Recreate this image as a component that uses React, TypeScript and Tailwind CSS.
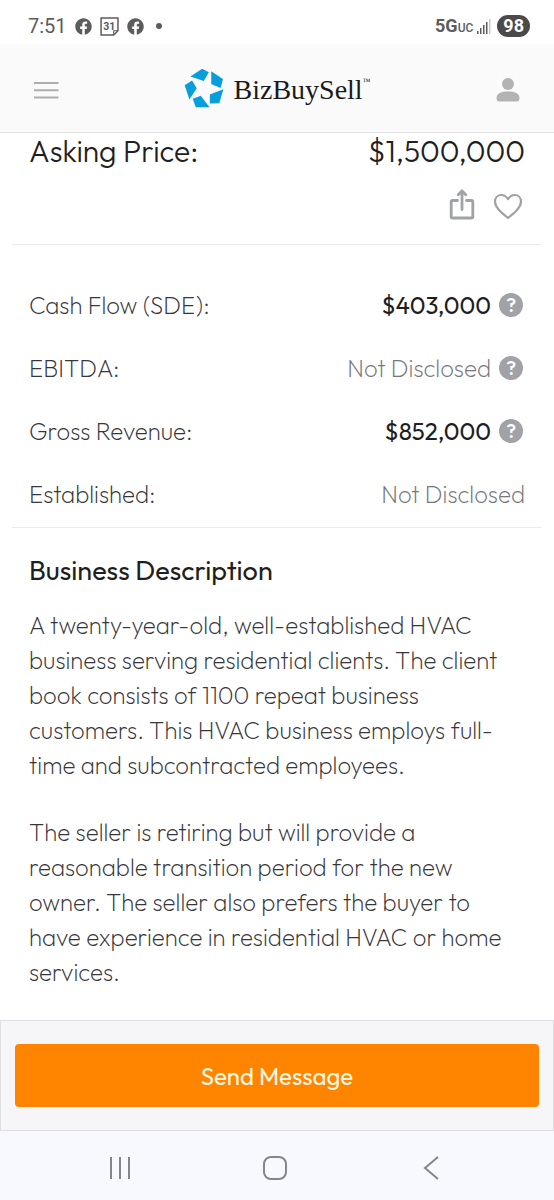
import React from 'react'
import { FaFacebook } from 'react-icons/fa'

type Metric = {
  label: string
  value: string
  disclosed: boolean
  help: boolean
}

const metrics: Metric[] = [
  { label: 'Cash Flow (SDE):', value: '$403,000', disclosed: true, help: true },
  { label: 'EBITDA:', value: 'Not Disclosed', disclosed: false, help: true },
  { label: 'Gross Revenue:', value: '$852,000', disclosed: true, help: true },
  { label: 'Established:', value: 'Not Disclosed', disclosed: false, help: false },
]

const paragraphs = [
  'A twenty-year-old, well-established HVAC business serving residential clients. The client book consists of 1100 repeat business customers. This HVAC business employs full-time and subcontracted employees.',
  'The seller is retiring but will provide a reasonable transition period for the new owner. The seller also prefers the buyer to have experience in residential HVAC or home services.',
]

// ─── Phone status bar ───────────────────────────────────────────────────────
const StatusBar: React.FC = () => (
  <div className="flex h-11 items-center justify-between bg-white pl-7 pr-6 pt-2 font-['Roboto',sans-serif] text-[#5c5c5c]">
    <div className="flex items-center gap-2">
      <span className="text-xl">7:51</span>
      <FaFacebook size={17} />
      <svg width="19" height="19" viewBox="0 0 18 18" fill="none" stroke="currentColor" strokeWidth="1.400">
        <path d="M1 1h16v12L13 17H1z" />
        <path d="M13 17v-4h4" strokeWidth="1" />
        <text x="8.800" y="12.600" textAnchor="middle" fontSize="10" fontWeight="700" fill="currentColor" stroke="none">31</text>
      </svg>
      <FaFacebook size={17} />
      <span className="ml-1 size-1.5 rounded-full bg-current" />
    </div>
    <div className="flex items-center">
      <span className="text-lg font-bold">5G</span>
      <span className="pt-1 text-xs font-medium">UC</span>
      <svg className="ml-1 mr-1.5" width="14" height="15" viewBox="0 0 14 15" fill="currentColor">
        <rect x="0" y="12" width="1.500" height="3" />
        <rect x="3" y="9" width="1.500" height="6" />
        <rect x="6" y="6" width="1.500" height="9" />
        <rect x="9" y="3" width="1.500" height="12" />
        <rect x="12" y="0" width="1.500" height="15" opacity="0.350" />
      </svg>
      <span className="rounded-full bg-[#4a4a4a] px-1.5 text-lg font-bold leading-[22px] text-white">98</span>
    </div>
  </div>
)

// ─── Site header ────────────────────────────────────────────────────────────
const Logo: React.FC = () => (
  <a href="#" className="flex items-center gap-2.5">
    <svg width="40" height="40" viewBox="547 24 119 118" fill="#069fdc">
      <path d="M566 49 601 26 621 36 606 62z" />
      <path d="M628 33 663 56 656 83 628 71z" />
      <path d="M664 87 652 128 624 129 624 102z" />
      <path d="M573 115 597 106 623 140 582 140z" />
      <path d="M549 75 571 61 585 84 563 117z" />
    </svg>
    <span className="flex items-start pt-1 font-['Liberation_Serif',serif] text-[28px] leading-9 text-[#1b1b1b]">
      BizBuySell<span className="pt-1 text-[8px] leading-3">™</span>
    </span>
  </a>
)

const Header: React.FC = () => (
  <header className="flex h-[89px] items-center justify-between border-b border-[#e2e2e2] bg-[#fafafa] px-8">
    <button type="button" aria-label="Menu" className="pt-1 text-[#adadad]">
      <svg width="28" height="20" viewBox="0 0 28 20" stroke="currentColor" strokeWidth="2">
        <path d="M2 3h24.500M2 10.200h24.500M2 17.400h24.500" />
      </svg>
    </button>
    <Logo />
    <button type="button" aria-label="Account" className="pt-1 text-[#b3b3b3]">
      <svg width="28" height="26" viewBox="0 0 28 26" fill="currentColor">
        <circle cx="14" cy="7" r="6" />
        <path d="M2.500 21c0-5 5-6.500 11.500-6.500S25.500 16 25.500 21c0 2.500-.8 3.500-3 3.500h-17c-2.200 0-3-1-3-3.500z" />
      </svg>
    </button>
  </header>
)

// ─── Price and actions ──────────────────────────────────────────────────────
const PriceSection: React.FC = () => (
  <section className="mx-3 border-b border-[#ececec] px-[17px] pb-5">
    <div className="flex items-center justify-between text-[30px] font-light leading-9 text-[#1f1f22]">
      <h1>Asking Price:</h1>
      <p>$1,500,000</p>
    </div>
    <div className="flex items-center justify-end gap-[18px] pt-5 text-[#a0a2a5]">
      <button type="button" aria-label="Share">
        <svg className="mb-1" width="26" height="31" viewBox="0 0 26 31" fill="none" stroke="currentColor" strokeWidth="2.800" strokeLinecap="round">
          <path d="M8.500 11.500H3.500c-.8 0-1.300.5-1.300 1.300v14.900c0 .8.5 1.300 1.300 1.300h19c.8 0 1.300-.5 1.300-1.300V12.800c0-.8-.5-1.300-1.300-1.300h-5" />
          <path d="M13 20.500V3M9.200 5.800 13 2l3.800 3.800" />
        </svg>
      </button>
      <button type="button" aria-label="Save">
        <svg width="32" height="27" viewBox="0 0 32 27" fill="none" stroke="currentColor" strokeWidth="2.200" strokeLinejoin="round">
          <path d="M15 6.200C13 3.200 11 2 8.500 2 4.500 2 2 5 2 8.500c0 6 6 10.800 13 16.500 7-5.700 13-10.500 13-16.500C28 5 25.500 2 21.500 2 19 2 17 3.200 15 6.200z" />
        </svg>
      </button>
    </div>
  </section>
)

// ─── Financial details ──────────────────────────────────────────────────────
const MetricRow: React.FC<{ metric: Metric }> = ({ metric }) => (
  <div className="flex h-[63px] items-center justify-between">
    <dt className="text-[#37373b]">{metric.label}</dt>
    <dd className="flex items-center gap-2">
      <span className={metric.disclosed ? 'font-normal text-[#1f1f22]' : 'text-[#77777b]'}>{metric.value}</span>
      {metric.help && (
        <button
          type="button"
          aria-label={`About ${metric.label}`}
          className="mr-0.5 flex size-6 items-center justify-center rounded-full bg-[#a0a2a7] text-xl font-medium leading-6 text-white"
        >
          ?
        </button>
      )}
    </dd>
  </div>
)

const Metrics: React.FC = () => (
  <dl className="mx-3 border-b border-[#ececec] px-[17px] pb-0.5 pt-7 text-[24px] font-extralight">
    {metrics.map((m) => (
      <MetricRow key={m.label} metric={m} />
    ))}
  </dl>
)

const Description: React.FC = () => (
  <section className="px-[29px] pb-7 pt-[26px]">
    <h2 className="text-[27px] leading-8 text-[#1f1f22]">Business Description</h2>
    <div className="flex flex-col gap-8 pt-[22px] text-[24px] font-extralight leading-[35px] text-[#37373b]">
      {paragraphs.map((text) => (
        <p key={text}>{text}</p>
      ))}
    </div>
  </section>
)

// ─── Bottom bars ────────────────────────────────────────────────────────────
const ContactBar: React.FC = () => (
  <div className="border border-[#dedee2] bg-[#f6f6f9] px-3.5 py-[23px]">
    <button type="button" className="h-[63px] w-full rounded bg-[#ff8400] text-[24px] text-[#fff8e0]">
      Send Message
    </button>
  </div>
)

const SystemNav: React.FC = () => (
  <nav className="flex h-[69px] items-center justify-between bg-[#f8f8ff] px-[106px] pt-1 text-[#85858b]">
    <button type="button" aria-label="Recent apps">
      <svg width="28" height="24" viewBox="0 0 28 24" stroke="currentColor" strokeWidth="2">
        <path d="M5 1v22M14 1v22M23 1v22" />
      </svg>
    </button>
    <button type="button" aria-label="Home">
      <svg width="28" height="24" viewBox="0 0 28 24" fill="none" stroke="currentColor" strokeWidth="2">
        <rect x="1" y="1" width="22" height="22" rx="7" />
      </svg>
    </button>
    <button type="button" aria-label="Back">
      <svg width="28" height="24" viewBox="0 0 28 24" fill="none" stroke="currentColor" strokeWidth="2">
        <path d="M18 1 5 12l13 11" />
      </svg>
    </button>
  </nav>
)

export default function App() {
  return (
    <div className="flex min-h-screen flex-col bg-white font-['Outfit','Lato',sans-serif]">
      <StatusBar />
      <Header />
      <main className="flex-1">
        <PriceSection />
        <Metrics />
        <Description />
      </main>
      <ContactBar />
      <SystemNav />
    </div>
  )
}
